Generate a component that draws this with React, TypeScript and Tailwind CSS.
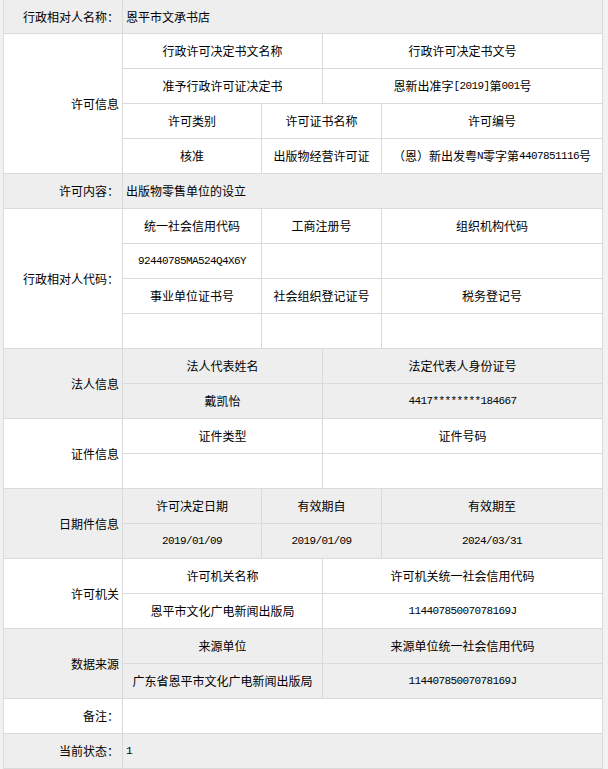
import React from "react";

const M = ({ children }: { children: React.ReactNode }) => (
  <span className="font-['Liberation_Mono',monospace] text-[11px] tracking-[-0.6px]">{children}</span>
);

type CP = { children?: React.ReactNode; className?: string; gray?: boolean };

const L = ({ children, className = "", gray }: CP) => (
  <div className={`flex items-center justify-end pr-[3px] ${gray ? "bg-[#eeeeee]" : "bg-white"} ${className}`}>
    {children}
  </div>
);

const C = ({ children, className = "", gray }: CP) => (
  <div className={`flex items-center justify-center whitespace-nowrap ${gray ? "bg-[#eeeeee]" : "bg-white"} ${className}`}>
    {children}
  </div>
);

const V = ({ children, className = "", gray }: CP) => (
  <div className={`col-span-4 flex items-center justify-start pl-[3px] ${gray ? "bg-[#eeeeee]" : "bg-white"} ${className}`}>
    {children}
  </div>
);

export default function App() {
  return (
    <div className="w-[608px] h-[769px] bg-[#f2f2f2] pl-[3px] overflow-hidden font-['Noto_Sans_CJK_SC','Noto_Sans',sans-serif] text-[12px] leading-none text-black">
      <div className="grid w-[600px] grid-cols-[118px_138px_60px_58px_220px] grid-rows-[33px_repeat(21,34px)] gap-px bg-[#dadada] px-px pb-px">
        {/* row 1 */}
        <L gray>行政相对人名称：</L>
        <V gray>恩平市文承书店</V>

        {/* 许可信息 */}
        <L className="row-span-4">许可信息</L>
        <C className="col-span-2">行政许可决定书文名称</C>
        <C className="col-span-2">行政许可决定书文号</C>
        <C className="col-span-2">准予行政许可证决定书</C>
        <C className="col-span-2">
          恩新出准字<M>[2019]</M>第<M>001</M>号
        </C>
        <C>许可类别</C>
        <C className="col-span-2">许可证书名称</C>
        <C>许可编号</C>
        <C>核准</C>
        <C className="col-span-2">出版物经营许可证</C>
        <C>
          （恩）新出发粤<M>N</M>零字第<M>4407851116</M>号
        </C>

        {/* 许可内容 */}
        <L gray>许可内容：</L>
        <V gray>出版物零售单位的设立</V>

        {/* 行政相对人代码 */}
        <L className="row-span-4">行政相对人代码：</L>
        <C>统一社会信用代码</C>
        <C className="col-span-2">工商注册号</C>
        <C>组织机构代码</C>
        <C>
          <M>92440785MA524Q4X6Y</M>
        </C>
        <C className="col-span-2" />
        <C />
        <C>事业单位证书号</C>
        <C className="col-span-2">社会组织登记证号</C>
        <C>税务登记号</C>
        <C />
        <C className="col-span-2" />
        <C />

        {/* 法人信息 */}
        <L gray className="row-span-2">法人信息</L>
        <C gray className="col-span-2">法人代表姓名</C>
        <C gray className="col-span-2">法定代表人身份证号</C>
        <C gray className="col-span-2">戴凯怡</C>
        <C gray className="col-span-2">
          <M>4417********184667</M>
        </C>

        {/* 证件信息 */}
        <L className="row-span-2">证件信息</L>
        <C className="col-span-2">证件类型</C>
        <C className="col-span-2">证件号码</C>
        <C className="col-span-2" />
        <C className="col-span-2" />

        {/* 日期件信息 */}
        <L gray className="row-span-2">日期件信息</L>
        <C gray>许可决定日期</C>
        <C gray className="col-span-2">有效期自</C>
        <C gray>有效期至</C>
        <C gray>
          <M>2019/01/09</M>
        </C>
        <C gray className="col-span-2">
          <M>2019/01/09</M>
        </C>
        <C gray>
          <M>2024/03/31</M>
        </C>

        {/* 许可机关 */}
        <L className="row-span-2">许可机关</L>
        <C className="col-span-2">许可机关名称</C>
        <C className="col-span-2">许可机关统一社会信用代码</C>
        <C className="col-span-2">恩平市文化广电新闻出版局</C>
        <C className="col-span-2">
          <M>11440785007078169J</M>
        </C>

        {/* 数据来源 */}
        <L gray className="row-span-2">数据来源</L>
        <C gray className="col-span-2">来源单位</C>
        <C gray className="col-span-2">来源单位统一社会信用代码</C>
        <C gray className="col-span-2">广东省恩平市文化广电新闻出版局</C>
        <C gray className="col-span-2">
          <M>11440785007078169J</M>
        </C>

        {/* 备注 */}
        <L>备注：</L>
        <V />

        {/* 当前状态 */}
        <L gray>当前状态：</L>
        <V gray>
          <M>1</M>
        </V>
      </div>
    </div>
  );
}
